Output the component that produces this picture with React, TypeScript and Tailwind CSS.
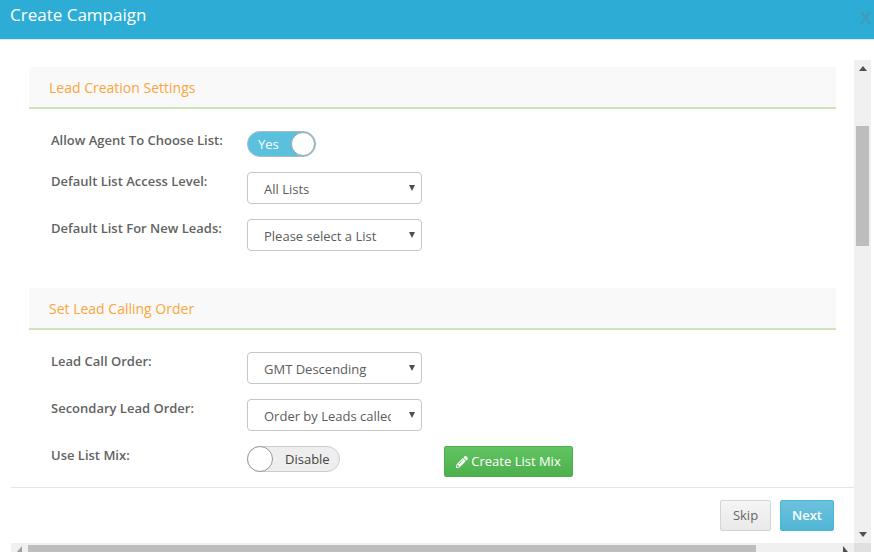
import { FaPencilAlt } from "react-icons/fa";

const font = "[font-family:'Open_Sans',sans-serif]";

function SectionHead({ title }: { title: string }) {
  return (
    <div className="h-[42px] bg-[#f9f9f9] border-b-2 border-[#cfe5b9] pl-5 flex items-center">
      <h2 className="text-[14px] leading-[18px] text-[#fba53c] font-normal pt-[1px]">{title}</h2>
    </div>
  );
}

function Row({ label, children, className }: { label: string; children: React.ReactNode; className: string }) {
  return (
    <div className={`flex pl-[22px] ${className}`}>
      <label className="w-[196px] shrink-0 text-[13px] leading-[18px] font-semibold text-[#636363]">{label}</label>
      {children}
    </div>
  );
}

function Select({ value }: { value: string }) {
  return (
    <div className="relative w-[175px] h-[32px]">
      <select
        defaultValue={value}
        className="appearance-none w-full h-full pl-[16px] pr-[30px] pt-[3px] bg-white border border-[#c6c6c6] rounded-[4px] text-[13px] text-[#5c5c5c]"
      >
        <option>{value}</option>
      </select>
      <svg className="absolute right-[7px] top-[13px] pointer-events-none" width="6" height="6" viewBox="0 0 6 6">
        <path d="M0 0H6L3 6Z" fill="#505050" />
      </svg>
    </div>
  );
}

export default function App() {
  return (
    <div className={`${font} w-[874px] h-[552px] bg-white overflow-hidden flex flex-col`}>
      <header className="h-[40px] shrink-0 bg-[#2dadd6] border-b border-[#d5eef6] flex items-start justify-between pl-[10px]">
        <h1 className="text-[17px] leading-[30px] text-white font-normal">Create Campaign</h1>
        <span className="text-[22px] leading-[22px] mt-[6px] mr-[2px] font-bold text-[#3f9dbc] [font-family:'Liberation_Sans',sans-serif]">x</span>
      </header>

      <div className="flex-1 flex min-h-0 pl-[11px] pr-[3px]">
        <div className="w-[843px] flex flex-col">
          <main className="h-[448px] shrink-0 overflow-hidden pl-[18px] pr-[18px] pt-[27px] border-b border-[#e5e5e5]">
            <section>
              <SectionHead title="Lead Creation Settings" />
              <div className="pt-[22px] pb-[37px]">
                <Row label="Allow Agent To Choose List:" className="h-[26px] mb-[15px]">
                  <div className="w-[69px] h-[26px] rounded-full bg-[#5bc0de] border border-[#a9bcc4] flex items-center justify-between pl-[10px] pr-[0px]">
                    <span className="text-[13px] text-white pt-[1px]">Yes</span>
                    <span className="w-[24px] h-[24px] rounded-full bg-white border border-[#9aa7ab]" />
                  </div>
                </Row>
                <Row label="Default List Access Level:" className="h-[32px] mb-[15px]">
                  <Select value="All Lists" />
                </Row>
                <Row label="Default List For New Leads:" className="h-[32px]">
                  <Select value="Please select a List" />
                </Row>
              </div>
            </section>
            <section>
              <SectionHead title="Set Lead Calling Order" />
              <div className="pt-[22px]">
                <Row label="Lead Call Order:" className="h-[32px] mb-[15px]">
                  <Select value="GMT Descending" />
                </Row>
                <Row label="Secondary Lead Order:" className="h-[32px] mb-[15px]">
                  <Select value="Order by Leads called" />
                </Row>
                <Row label="Use List Mix:" className="h-[31px]">
                  <div className="w-[93px] h-[26px] rounded-full bg-[#eeeeee] border border-[#cccccc] flex items-center">
                    <span className="w-[26px] h-[26px] ml-[-1px] rounded-full bg-white border border-[#8e9a9d]" />
                    <span className="ml-[12px] pt-[1px] text-[13px] text-[#444444]">Disable</span>
                  </div>
                  <button className="ml-[104px] w-[129px] h-[31px] rounded-[2px] border border-[#4cae4c] bg-linear-to-b from-[#62c462] to-[#4cb04c] text-white text-[13px] flex items-center justify-center gap-[3px]">
                    <FaPencilAlt className="w-[12px] h-[12px]" />
                    Create List Mix
                  </button>
                </Row>
              </div>
            </section>
          </main>

          <footer className="h-[55px] shrink-0 flex justify-end items-start gap-[9px] pt-[12px] pr-[20px]">
            <button className="w-[51px] h-[31px] rounded-[2px] border border-[#d4d4d4] bg-linear-to-b from-[#f5f5f5] to-[#e9e9e9] text-[13px] text-[#666666]">Skip</button>
            <button className="w-[54px] h-[31px] rounded-[2px] border border-[#46b8da] bg-linear-to-b from-[#6cc1dc] to-[#50b6d6] text-[13px] font-semibold text-white">Next</button>
          </footer>

          <div className="h-[9px] shrink-0 bg-[#f0f0f0] flex items-end">
            <div className="w-[17px] h-[7px] flex items-center justify-center">
              <svg width="6" height="6" viewBox="0 0 6 6"><path d="M5 0V6H0Z" fill="#a0a0a0" /></svg>
            </div>
            <div className="w-[728px] h-[7px] bg-[#bdbdbd]" />
            <div className="flex-1 h-[7px] flex items-center justify-end pr-[6px]">
              <svg width="5" height="6" viewBox="0 0 5 6"><path d="M0 0L5 6H0Z" fill="#505050" /></svg>
            </div>
          </div>
        </div>

        <div className="w-[17px] flex flex-col mt-[20px]">
          <div className="flex-1 bg-[#f0f0f0] flex flex-col items-center">
            <svg className="mt-[6px] shrink-0" width="8" height="5" viewBox="0 0 8 5"><path d="M4 0L8 5H0Z" fill="#505050" /></svg>
            <div className="w-[13px] h-[120px] mt-[55px] bg-[#bdbdbd]" />
            <div className="flex-1" />
            <svg className="mb-[6px] shrink-0" width="8" height="5" viewBox="0 0 8 5"><path d="M4 5L0 0H8Z" fill="#505050" /></svg>
          </div>
          <div className="h-[9px] shrink-0 bg-[#e0e0e0]" />
        </div>
      </div>
    </div>
  );
}
